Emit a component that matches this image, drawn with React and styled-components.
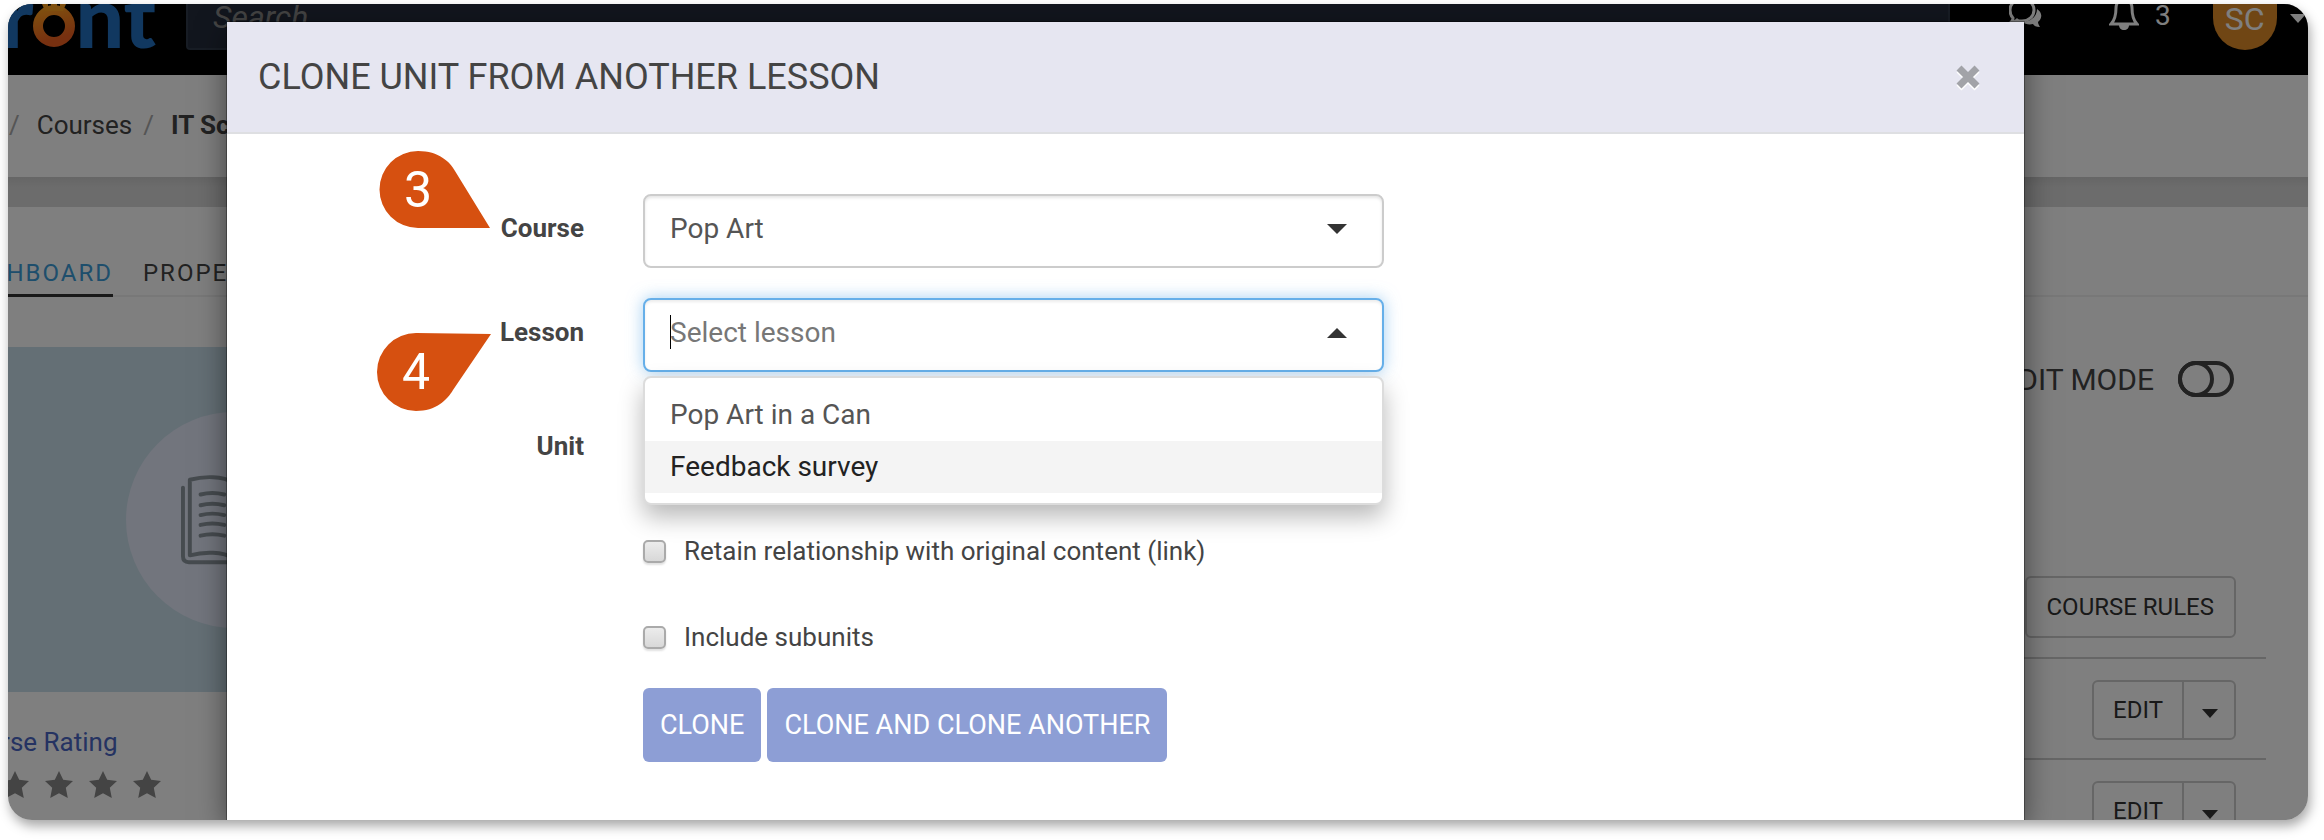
import React, { useState } from "react";
import styled, { createGlobalStyle, css } from "styled-components";

const GlobalStyle = createGlobalStyle`
  * {
    box-sizing: border-box;
  }

  body {
    margin: 0;
    background: #fff;
    color: #444;
    font-family: Roboto, "Liberation Sans", sans-serif;
    font-size: 26px;
  }

  button,
  input,
  select {
    margin: 0;
    font-family: inherit;
  }
`;

const Frame = styled.div`
  position: relative;
  height: calc(100vh - 24px);
  margin: 4px 16px 0 8px;
  border-radius: 24px;
  overflow: hidden;
`;

const Shadow = styled.div`
  height: 100vh;
  overflow: hidden;

  ${Frame} {
    box-shadow: 2px 6px 12px rgba(0, 0, 0, 0.35);
  }
`;

/* ---------- page behind the dialog ---------- */

const Topbar = styled.header`
  display: flex;
  align-items: flex-start;
  height: 71px;
  background: #000;
`;

const Logo = styled.a`
  display: flex;
  flex: none;
  justify-content: flex-end;
  width: 148px;
  height: 71px;
  margin-right: 30px;
  color: #2270c0;
  font-family: Lato, sans-serif;
  font-size: 86px;
  font-weight: 900;
  line-height: 22px;
  text-decoration: none;
`;

const Gear = styled.svg`
  flex: none;
  width: 42px;
  height: 50px;
`;

const Search = styled.input`
  flex: 1;
  min-width: 0;
  height: 46px;
  padding: 0 25px 18px;
  border: solid #303a4a;
  border-width: 0 2px 2px;
  border-radius: 0 0 4px 4px;
  background: #242d3c;
  font-size: 32px;
  font-style: italic;

  &::placeholder {
    color: #888;
    opacity: 1;
  }
`;

const Tools = styled.div`
  display: flex;
  flex: none;
  align-items: flex-start;
  width: 358px;
  padding-left: 59px;
`;

const IconButton = styled.button`
  display: flex;
  align-items: flex-start;
  margin-right: ${({ $space }) => $space}px;
  padding: 0;
  border: 0;
  background: none;
  color: #fff;
  font-size: 28px;
  line-height: 24px;
`;

const Count = styled.span`
  margin-left: 16px;
`;

const Avatar = styled.span`
  display: flex;
  align-items: center;
  justify-content: center;
  width: 64px;
  height: 46px;
  margin-right: 13px;
  padding-bottom: 16px;
  border-radius: 0 0 32px 32px;
  background: #e08c28;
  font-size: 32px;
`;

const AccountArrow = styled.span`
  display: flex;
  padding-top: 10px;
`;

const Breadcrumb = styled.nav`
  display: flex;
  align-items: center;
  height: 102px;
  margin-left: -80px;
  padding-bottom: 2px;

  a,
  strong {
    color: #444;
    text-decoration: none;
  }
`;

const Slash = styled.span`
  margin: 0 17px 0 11px;
  color: #aaa;
`;

const Band = styled.div`
  height: 30px;
  background: linear-gradient(#ccc, #d8d8d8 10px);
`;

const Tabs = styled.nav`
  display: flex;
  gap: 30px;
  height: 90px;
  margin-left: -53px;
  padding-top: 52px;
  border-bottom: 2px solid #f0f0f0;
`;

const Tab = styled.a`
  height: 38px;
  border-bottom: 3px solid ${({ $active }) => ($active ? "#333" : "transparent")};
  color: ${({ $active }) => ($active ? "#3c9cd8" : "#444")};
  font-size: 24px;
  letter-spacing: 2px;
  line-height: 28px;
  text-decoration: none;
`;

const Columns = styled.main`
  display: flex;
  justify-content: space-between;
`;

const CourseCard = styled.section`
  width: 452px;
  padding-top: 50px;
`;

const Cover = styled.div`
  display: grid;
  place-items: center;
  height: 345px;
  background: #c8deea;
`;

const CoverDisc = styled.div`
  display: grid;
  place-items: center;
  width: 216px;
  height: 216px;
  border-radius: 50%;
  background: #e4eafa;
`;

const RatingLink = styled.a`
  display: block;
  margin: 34px 0 12px -53px;
  color: #4a66c4;
  line-height: 32px;
  text-decoration: none;
`;

const Stars = styled.div`
  display: flex;
  gap: 14px;
  margin-left: -52px;
  color: #888;
`;

const Panel = styled.section`
  display: flex;
  flex-direction: column;
  width: 500px;
  padding: 64px 42px 0 0;
`;

const EditMode = styled.label`
  display: flex;
  align-items: center;
  align-self: flex-end;
  gap: 24px;
  height: 36px;
  margin-right: 32px;
  margin-bottom: 179px;
  font-size: 30px;

  input {
    position: absolute;
    opacity: 0;
  }
`;

const PanelRow = styled.div`
  display: flex;
  justify-content: flex-end;
  padding: ${({ $first }) => ($first ? "0 30px 19px 0" : "21px 30px 18px 0")};
  border-bottom: 2px solid #ccc;
`;

const PlainButton = styled.button`
  height: ${({ $tall }) => ($tall ? 62 : 60)}px;
  padding: 0 20px;
  border: 2px solid #ccc;
  border-radius: 6px;
  background: #fff;
  color: #333;
  font-size: 24px;

  ${({ $side }) =>
    $side === "left" &&
    css`
      padding: 0 19px;
      border-radius: 6px 0 0 6px;
    `}

  ${({ $side }) =>
    $side === "right" &&
    css`
      width: 54px;
      margin-left: -2px;
      padding: 0 0 0 2px;
      border-radius: 0 6px 6px 0;
    `}
`;

/* ---------- dialog ---------- */

const Overlay = styled.div`
  position: absolute;
  inset: 0;
  padding: 18px 284px 0 219px;
  background: rgba(0, 0, 0, 0.5);
`;

const Dialog = styled.section`
  min-height: 100%;
  background: #fff;
  box-shadow: 0 0 0 1px rgba(0, 0, 0, 0.3), 0 8px 28px rgba(0, 0, 0, 0.5);
`;

const DialogHeader = styled.header`
  display: flex;
  align-items: center;
  justify-content: space-between;
  height: 112px;
  padding: 0 44px 0 31px;
  border-bottom: 2px solid #dedfe2;
  background: #e6e6f1;
`;

const Title = styled.h1`
  margin: 0;
  font-size: 36px;
  font-weight: 400;
`;

const CloseButton = styled.button`
  display: flex;
  padding: 0;
  border: 0;
  background: none;
  color: #a2a3a8;

  svg {
    filter: drop-shadow(0 2px 0 #fff);
  }
`;

const Form = styled.form`
  display: flex;
  flex-direction: column;
  gap: 30px;
  padding: 60px 0 40px;
`;

const Row = styled.div`
  display: flex;
  position: relative;
  gap: 59px;
  min-height: ${({ $tall }) => ($tall ? 103 : 74)}px;
`;

const Label = styled.label`
  flex: none;
  width: 357px;
  padding-top: ${({ $low }) => ($low ? 28 : 18)}px;
  font-weight: 700;
  line-height: 32px;
  text-align: right;
`;

const Field = styled.div`
  position: relative;
  flex: 0 1 741px;
  height: 74px;
`;

const control = css`
  width: 100%;
  height: 74px;
  padding: 0 60px 6px 25px;
  border: 2px solid #ccc;
  border-radius: 8px;
  outline: 0;
  background: #fff;
  box-shadow: inset 0 2px 3px rgba(0, 0, 0, 0.1);
  color: #555;
  font-size: 28px;
`;

const Select = styled.select`
  ${control}
  appearance: none;
`;

const Combobox = styled.input`
  ${control}
  border-color: #66afe9;
  box-shadow: inset 0 2px 3px rgba(0, 0, 0, 0.08), 0 0 16px rgba(102, 175, 233, 0.6);
  caret-color: transparent;

  &::placeholder {
    color: #777;
    opacity: 1;
  }
`;

const TextCursor = styled.span`
  position: absolute;
  top: 17px;
  left: 27px;
  width: 1px;
  height: 34px;
  background: #000;
`;

const Arrow = styled.svg`
  position: absolute;
  top: 29px;
  right: 37px;
  pointer-events: none;
`;

const Menu = styled.ul`
  position: absolute;
  z-index: 1;
  top: 78px;
  left: 0;
  width: 100%;
  margin: 0;
  padding: 11px 0 10px;
  border: 2px solid #dcdcdc;
  border-radius: 8px;
  background: #fff;
  box-shadow: 0 12px 24px rgba(0, 0, 0, 0.28);
  list-style: none;
`;

const Option = styled.li`
  padding: 0 25px;
  background: ${({ $active }) => ($active ? "#f4f4f4" : "#fff")};
  color: ${({ $active }) => ($active ? "#222" : "#555")};
  font-size: 28px;
  line-height: 52px;
`;

const Checks = styled.div`
  display: flex;
  flex-direction: column;
  gap: 54px;
  margin-left: 416px;
`;

const CheckLabel = styled.label`
  display: flex;
  align-items: center;
  gap: 18px;
  line-height: 32px;
`;

const Checkbox = styled.input`
  appearance: none;
  width: 23px;
  height: 23px;
  border: 2px solid #aaa;
  border-radius: 5px;
  background: linear-gradient(#ececec, #d8d8d8);
  box-shadow: 0 2px 2px rgba(0, 0, 0, 0.12);

  &:checked {
    background: #8d9ed5;
  }
`;

const Actions = styled.div`
  display: flex;
  gap: 6px;
  margin-left: 416px;
  padding-top: 5px;
`;

const PrimaryButton = styled.button`
  height: 74px;
  padding: 0 17px;
  border: 0;
  border-radius: 6px;
  background: #8d9ed5;
  color: #fff;
  font-size: 27px;
`;

const Marker = styled.svg`
  position: absolute;
  left: ${({ $left }) => $left}px;
  top: ${({ $top }) => $top}px;
  fill: #d65010;

  text {
    fill: #fff;
    font-size: 50px;
    text-anchor: middle;
  }
`;

const Caret = ({ width = 16, height = 9 }) => (
  <svg width={width} height={height} viewBox="0 0 20 10" preserveAspectRatio="none" fill="currentColor">
    <path d="M0 0h20L10 10z" />
  </svg>
);

const Star = () => (
  <svg width="30" height="30" viewBox="0 0 30 30" fill="currentColor">
    <path d="M15 1l4.200 8.800 9.800 1.200-7.200 6.700 2 10.300L15 23.200 6.200 28l2-10.300L1 11l9.800-1.200z" />
  </svg>
);

const BookIcon = () => (
  <svg width="106" height="92" viewBox="0 0 108 92" fill="none" stroke="#8c979e" strokeWidth="4" strokeLinecap="round" strokeLinejoin="round">
    <path d="M54 8C42 1 24 1 9 5v77c15-4 33-4 45 3 12-7 30-7 45-3V5C84 1 66 1 54 8v77" />
    <path d="M2 13v70q0 6 6 6h92q6 0 6-6V13" />
    {[20, 31, 41, 51, 62].map((y) => (
      <path key={y} d={`M20 ${y}q12-3 24 0M64 ${y}q12-3 24 0`} />
    ))}
  </svg>
);

const App = () => {
  const [course, setCourse] = useState("Pop Art");
  const [active, setActive] = useState(1);
  const lessons = ["Pop Art in a Can", "Feedback survey"];

  return (
    <Shadow>
      <GlobalStyle />
      <Frame>
        <Topbar>
          <Logo href="#home" aria-label="eFront">
            <span>efr</span>
            <Gear viewBox="0 0 42 50">
              <defs>
                <linearGradient id="gear" x1="0" y1="0" x2="0.3" y2="1">
                  <stop offset="0" stopColor="#ffa01e" />
                  <stop offset="1" stopColor="#ee6020" />
                </linearGradient>
              </defs>
              <circle cx="21" cy="22" r="16" fill="none" stroke="url(#gear)" strokeWidth="10" />
              <path d="M9 0h6v3h3V0h6v3h3V0h6l-3 7H12z" fill="#ffa01e" />
            </Gear>
            <span>nt</span>
          </Logo>
          <Search type="search" placeholder="Search" aria-label="Search" />
          <Tools>
            <IconButton $space={66} aria-label="Messages">
              <svg width="34" height="30" viewBox="0 0 34 30" fill="none">
                <path d="M13-5c7 0 12 5 12 11s-5 11-12 11c-2 0-4 0-5-1-2 2-4 3-7 3 2-1 3-3 3-5-2-2-3-5-3-8C1 0 6-5 13-5z" stroke="#fff" strokeWidth="3" />
                <path d="M28 5c5 3 6 9 1 13 0 2 1 3 2 5-4 0-6-1-7-3-4 1-8 0-11-2 8 0 15-5 15-13z" fill="#fff" />
              </svg>
            </IconButton>
            <IconButton $space={42} aria-label="Notifications">
              <svg width="30" height="30" viewBox="0 0 30 30" fill="none">
                <path d="M2 20c4-4 5-9 5-16 0-5 3-8 8-8s8 3 8 8c0 7 1 12 5 16z" stroke="#fff" strokeWidth="3" />
                <path d="M10 21h10c0 3-2 5-5 5s-5-2-5-5z" fill="#fff" />
              </svg>
              <Count>3</Count>
            </IconButton>
            <IconButton $space={0} aria-label="Account">
              <Avatar>SC</Avatar>
              <AccountArrow>
                <Caret />
              </AccountArrow>
            </IconButton>
          </Tools>
        </Topbar>

        <Breadcrumb>
          <a href="#home">Home</a>
          <Slash>/</Slash>
          <a href="#courses">Courses</a>
          <Slash>/</Slash>
          <strong>IT Sciences</strong>
        </Breadcrumb>
        <Band />
        <Tabs>
          <Tab href="#dashboard" $active>
            DASHBOARD
          </Tab>
          <Tab href="#properties">PROPERTIES</Tab>
        </Tabs>

        <Columns>
          <CourseCard>
            <Cover>
              <CoverDisc>
                <BookIcon />
              </CoverDisc>
            </Cover>
            <RatingLink href="#rating">Course Rating</RatingLink>
            <Stars>
              {[1, 2, 3, 4, 5].map((n) => (
                <Star key={n} />
              ))}
            </Stars>
          </CourseCard>
          <Panel>
            <EditMode>
              EDIT MODE
              <input type="checkbox" />
              <svg width="56" height="36" viewBox="0 0 56 36" fill="none" stroke="#444" strokeWidth="4">
                <rect x="2" y="2" width="52" height="32" rx="16" />
                <circle cx="18" cy="18" r="16" />
              </svg>
            </EditMode>
            <PanelRow $first>
              <PlainButton $tall>COURSE RULES</PlainButton>
            </PanelRow>
            {[1, 2].map((n) => (
              <PanelRow key={n}>
                <PlainButton $side="left">EDIT</PlainButton>
                <PlainButton $side="right" aria-label="More">
                  <Caret />
                </PlainButton>
              </PanelRow>
            ))}
          </Panel>
        </Columns>

        <Overlay>
          <Dialog role="dialog" aria-labelledby="clone-title">
            <DialogHeader>
              <Title id="clone-title">CLONE UNIT FROM ANOTHER LESSON</Title>
              <CloseButton aria-label="Close">
                <svg width="24" height="24" viewBox="0 0 24 24" stroke="currentColor" strokeWidth="7">
                  <path d="M3 3l18 18M21 3L3 21" />
                </svg>
              </CloseButton>
            </DialogHeader>

            <Form onSubmit={(e) => e.preventDefault()}>
              <Row>
                <Marker $left={152} $top={-44} width="112" height="80">
                  <path d="M39 1C60 1 71 12 76 21l35 57H39A38.500 38.500 0 0 1 39 1z" />
                  <text x="39" y="57">3</text>
                </Marker>
                <Label htmlFor="course">Course</Label>
                <Field>
                  <Select id="course" value={course} onChange={(e) => setCourse(e.target.value)}>
                    <option>Pop Art</option>
                  </Select>
                  <Arrow width="20" height="12" viewBox="0 0 20 12" fill="#333">
                    <path d="M0 1h20L10 11z" />
                  </Arrow>
                </Field>
              </Row>
              <Row>
                <Marker $left={150} $top={35} width="116" height="80">
                  <path d="M39 0l75 1-38 56c-6 10-17 21-37 21A39 39 0 0 1 39 0z" />
                  <text x="39" y="56">4</text>
                </Marker>
                <Label htmlFor="lesson">Lesson</Label>
                <Field>
                  <Combobox id="lesson" role="combobox" aria-expanded="true" aria-controls="lesson-list" placeholder="Select lesson" />
                  <TextCursor />
                  <Arrow width="20" height="12" viewBox="0 0 20 12" fill="#333">
                    <path d="M0 11h20L10 1z" />
                  </Arrow>
                  <Menu id="lesson-list" role="listbox">
                    {lessons.map((lesson, i) => (
                      <Option key={lesson} role="option" aria-selected={i === active} $active={i === active} onMouseEnter={() => setActive(i)}>
                        {lesson}
                      </Option>
                    ))}
                  </Menu>
                </Field>
              </Row>
              <Row $tall>
                <Label as="span" $low>
                  Unit
                </Label>
              </Row>
              <Checks>
                <CheckLabel>
                  <Checkbox type="checkbox" />
                  Retain relationship with original content (link)
                </CheckLabel>
                <CheckLabel>
                  <Checkbox type="checkbox" />
                  Include subunits
                </CheckLabel>
              </Checks>
              <Actions>
                <PrimaryButton type="submit">CLONE</PrimaryButton>
                <PrimaryButton type="button">CLONE AND CLONE ANOTHER</PrimaryButton>
              </Actions>
            </Form>
          </Dialog>
        </Overlay>
      </Frame>
    </Shadow>
  );
};

export default App;
